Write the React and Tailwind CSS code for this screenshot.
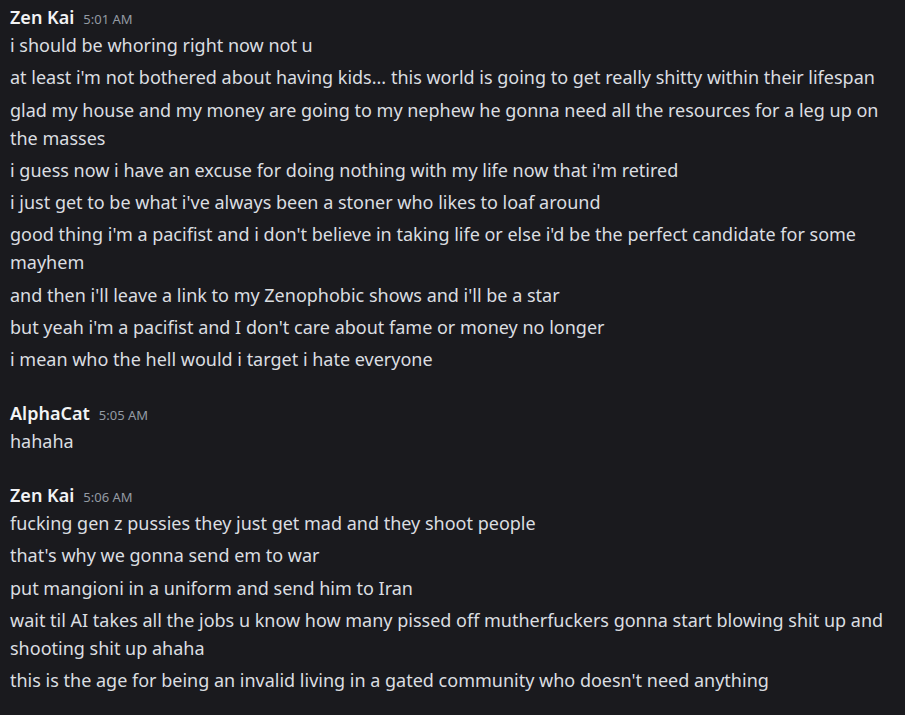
import React from 'react';

const groups = [
    {
        name: 'Zen Kai',
        time: '5:01 AM',
        lines: [
            'i should be whoring right now not u',
            "at least i'm not bothered about having kids... this world is going to get really shitty within their lifespan",
            'glad my house and my money are going to my nephew he gonna need all the resources for a leg up on the masses',
            "i guess now i have an excuse for doing nothing with my life now that i'm retired",
            "i just get to be what i've always been a stoner who likes to loaf around",
            "good thing i'm a pacifist and i don't believe in taking life or else i'd be the perfect candidate for some mayhem",
            "and then i'll leave a link to my Zenophobic shows and i'll be a star",
            "but yeah i'm a pacifist and I don't care about fame or money no longer",
            'i mean who the hell would i target i hate everyone',
        ],
    },
    {
        name: 'AlphaCat',
        time: '5:05 AM',
        lines: ['hahaha'],
    },
    {
        name: 'Zen Kai',
        time: '5:06 AM',
        lines: [
            'fucking gen z pussies they just get mad and they shoot people',
            "that's why we gonna send em to war",
            'put mangioni in a uniform and send him to Iran',
            'wait til AI takes all the jobs u know how many pissed off mutherfuckers gonna start blowing shit up and shooting shit up ahaha',
            "this is the age for being an invalid living in a gated community who doesn't need anything",
        ],
    },
];

const App = () => {
    return (
        <div className="min-h-[715px] w-[905px] bg-[#1a1a1e] text-[#dbdee1] font-['Noto_Sans',sans-serif] pl-[10px] pr-[14px] pt-[3px]">
            <div className="flex flex-col gap-[26px]">
                {groups.map((g, gi) => (
                    <div key={gi}>
                        <div className="flex items-baseline gap-[9px] h-[28px] leading-[28px]">
                            <span className="text-[18px] font-semibold text-[#f2f3f5]">{g.name}</span>
                            <span className="text-[13px] text-[#949ba4]">{g.time}</span>
                        </div>
                        <div className="flex flex-col gap-[4.25px]">
                            {g.lines.map((line, i) => (
                                <p key={i} className="text-[18px] leading-[28px]">{line}</p>
                            ))}
                        </div>
                    </div>
                ))}
            </div>
        </div>
    );
};

export default App;
